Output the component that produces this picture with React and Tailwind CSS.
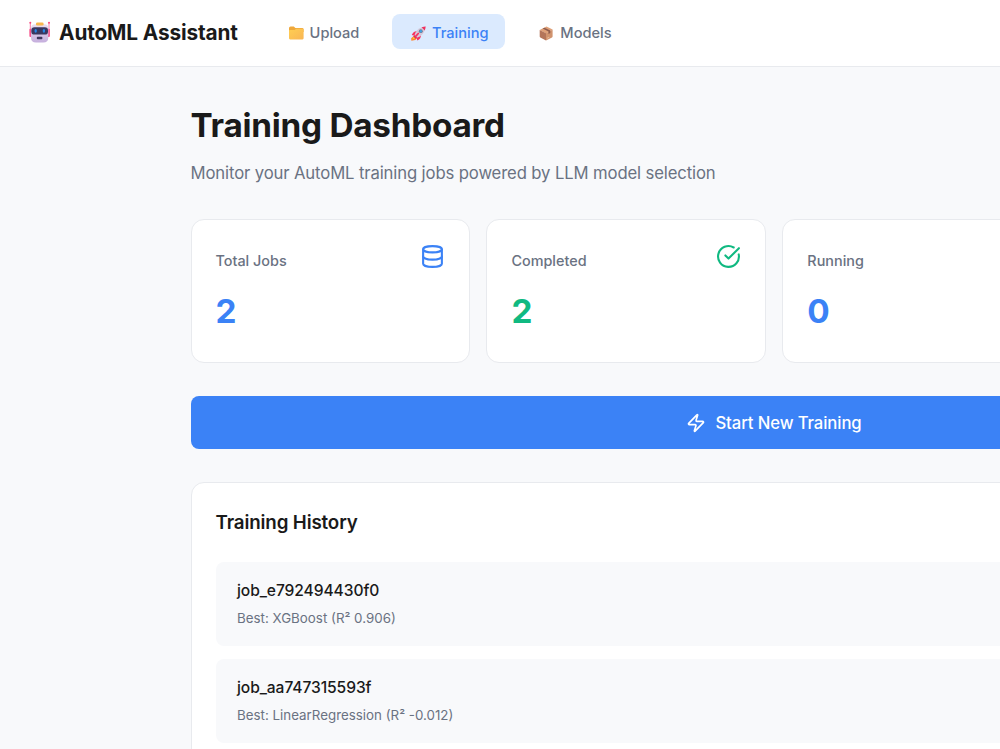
import React from 'react';
import { CircleCheckBig, Clock, Database, Zap } from 'lucide-react';

const RobotIcon = () => (
  <svg className="w-[23px] h-[23px]" viewBox="0 0 23 23">
    <defs>
      <linearGradient id="robotFace" x1="0" y1="0" x2="0" y2="1">
        <stop offset="0" stopColor="#eae0f1" />
        <stop offset="1" stopColor="#c5aedd" />
      </linearGradient>
    </defs>
    <path d="M2.3 1.5v11M21 1.5v11" stroke="#fb7fa8" strokeWidth="1" />
    <circle cx="2.3" cy="1.8" r="1" fill="#f9487f" />
    <circle cx="21" cy="1.8" r="1" fill="#f9487f" />
    <rect x="1.4" y="7.7" width="2.6" height="8.4" rx="1" fill="#f7508b" />
    <rect x="19.3" y="7.7" width="2.6" height="8.4" rx="1" fill="#f7508b" />
    <path d="M7 3.3h9.3q4 0 4 4v9.2q0 5-5 5H8q-5 0-5-5V7.3q0-4 4-4z" fill="url(#robotFace)" />
    <rect x="8" y="1.5" width="7.6" height="3" rx="1.3" fill="#f9b74f" />
    <rect x="3.3" y="6.3" width="16.7" height="7.3" rx="3.2" fill="#3a3760" />
    <ellipse cx="7.7" cy="9.8" rx="1.2" ry="1.9" fill="#2688e8" />
    <ellipse cx="15.9" cy="9.8" rx="1.2" ry="1.9" fill="#2688e8" />
    <rect x="8.8" y="15.8" width="5.6" height="2.4" rx="0.9" fill="#42385f" />
  </svg>
);

const FolderIcon = () => (
  <svg className="w-[15px] h-[14px]" viewBox="0 0 15 14">
    <defs>
      <linearGradient id="folderFront" x1="0" y1="0" x2="1" y2="1">
        <stop offset="0" stopColor="#ffce52" />
        <stop offset="1" stopColor="#f9b655" />
      </linearGradient>
    </defs>
    <path d="M0 2Q0 .4 1.6.4h3.2l1.6 1.5h6.7q1.5 0 1.5 1.4V6H0z" fill="#efa83b" />
    <path d="M0 4.8q0-.8.8-.8h4.8l1.5-1.2h6.5q1 0 1 .8v8.7q0 1.1-1.1 1.1H1.1Q0 13.4 0 12.3z" fill="url(#folderFront)" />
  </svg>
);

const RocketIcon = () => (
  <svg className="w-[15px] h-[15px]" viewBox="0 0 15 15">
    <path d="M3.5 9.5.2 12.2.4 14.8 4.3 14 6 12z" fill="#ff822d" />
    <path d="M2.8 10.7 1.2 13.4 4.2 12.3z" fill="#ffc83d" />
    <path d="M6.2 5.2Q2.4 4.7.8 9l4 1zM9.8 8.8q.6 3.9-3.5 5.7L5 10z" fill="#f8315f" />
    <path d="M3.5 9.3Q5 3.3 10.8 1.2q2.8-.7 3.6-.6 0 1.6-.7 3.8Q11.5 10 5.8 11.7z" fill="#d4cadb" />
    <path d="M10.6 1.2Q13.8.3 14.6.4q0 1.7-.8 4z" fill="#f0315f" />
    <path d="M3.3 9.2l2.7 2.6-1.3 1-2.4-2.5z" fill="#c72d65" />
    <circle cx="9.8" cy="5.2" r="1.9" fill="#75758c" />
    <circle cx="9.8" cy="5.2" r="1.2" fill="#3ca5e7" />
    <path d="M7.3 7.5 4.4 10.6" stroke="#f8315f" strokeWidth="1.7" strokeLinecap="round" />
  </svg>
);

const PackageIcon = () => (
  <svg className="w-[15px] h-[15px]" viewBox="0 0 15 15">
    <path d="M.7 4 7.5.6l6.1 2.8-6.6 4z" fill="#dfa078" />
    <path d="M.7 4 7 7.3v7.2l-5.7-3q-.6-.4-.6-1z" fill="#b4755a" />
    <path d="M7 7.3 13.6 3.4v7.2q0 .5-.6.8L7 14.5z" fill="#d0936e" />
    <path d="M3.6 2.6 9.5 5.6v2.5l1.8-1V4.6L5.4 1.7z" fill="#8d5b4d" />
    <path d="m8.2 11.8 2-1v1l-2 1z" fill="#e8bc9a" />
  </svg>
);

const navItems = [
  { label: 'Upload', icon: FolderIcon, className: 'w-28 text-gray-500' },
  { label: 'Training', icon: RocketIcon, className: 'w-[112.5px] pl-[3px] bg-blue-100 text-[#3b82f6]' },
  { label: 'Models', icon: PackageIcon, className: 'w-[118px] text-gray-500' },
];

const stats = [
  { label: 'Total Jobs', value: '2', icon: Database, color: 'text-[#3b82f6]' },
  { label: 'Completed', value: '2', icon: CircleCheckBig, color: 'text-[#10b981]' },
  { label: 'Running', value: '0', icon: Clock, color: 'text-[#3b82f6]' },
];

const jobs = [
  { id: 'job_e792494430f0', best: 'Best: XGBoost (R² 0.906)' },
  { id: 'job_aa747315593f', best: 'Best: LinearRegression (R² -0.012)' },
];

const Header = () => (
  <header className="h-[67px] flex items-start bg-white border-b border-[#e8eaee] pl-7">
    <div className="flex items-center h-[65px] w-[240px] gap-2">
      <RobotIcon />
      <span className="pt-px text-[20.8px] font-bold tracking-[-0.13px] text-[#1a1a1a] whitespace-nowrap">
        AutoML Assistant
      </span>
    </div>
    <nav className="flex gap-3 pt-3.5">
      {navItems.map(({ label, icon: Icon, className }) => (
        <a
          key={label}
          className={`flex items-center justify-center gap-1.5 h-[35px] rounded-lg pt-[3px] text-[14.6px] font-medium ${className}`}
        >
          <Icon />
          <span className="pt-px">{label}</span>
        </a>
      ))}
    </nav>
  </header>
);

const StatCard = ({ label, value, icon: Icon, color }) => (
  <div className="h-36 bg-white border border-[#e8eaee] rounded-[13px] p-6">
    <div className="flex justify-between">
      <span className="pt-1.5 text-[14.4px] leading-[22px] font-medium text-gray-500">{label}</span>
      <Icon className={`w-[25px] h-[25px] ${color}`} />
    </div>
    <p className={`mt-3.5 text-[33.3px] leading-[50px] font-bold ${color}`}>{value}</p>
  </div>
);

const App = () => {
  return (
    <div className="w-[1000px] h-[749px] overflow-hidden bg-[#f8f9fb] font-['Inter',sans-serif]">
      <Header />
      <main className="w-[1167px] ml-[190.5px] pt-[33px]">
        <h1 className="text-[33.3px] leading-[50px] font-bold tracking-[-0.25px] text-[#1a1a1a]">Training Dashboard</h1>
        <p className="mt-[11px] text-[16.7px] leading-[25px] tracking-[-0.13px] text-gray-500">
          Monitor your AutoML training jobs powered by LLM model selection
        </p>

        <div className="grid grid-cols-4 gap-[16.7px] mt-[33px]">
          {stats.map((stat) => (
            <StatCard key={stat.label} {...stat} />
          ))}
        </div>

        <button className="flex items-center justify-center gap-[9px] w-full h-[53px] mt-[33px] rounded-lg bg-[#3b82f6] text-white text-[16.7px] font-medium tracking-[-0.1px]">
          <Zap className="w-5 h-5" />
          <span className="pt-0.5">Start New Training</span>
        </button>

        <section className="mt-[33px] bg-white border border-[#e8eaee] rounded-[13px] px-6 pt-[25px] pb-6">
          <h2 className="pt-px text-[18.75px] leading-7 font-semibold tracking-[-0.14px] text-[#1a1a1a]">Training History</h2>
          <div className="flex flex-col gap-[13px] mt-[25px]">
            {jobs.map((job) => (
              <div key={job.id} className="h-[84px] rounded-lg bg-[#f8f9fb] px-[21.5px] pt-[17px]">
                <p className="text-[15.6px] leading-6 font-medium tracking-[-0.09px] text-[#1a1a1a]">{job.id}</p>
                <p className="mt-[5px] text-[13.35px] leading-5 text-gray-500">{job.best}</p>
              </div>
            ))}
          </div>
        </section>
      </main>
    </div>
  );
};

export default App;
